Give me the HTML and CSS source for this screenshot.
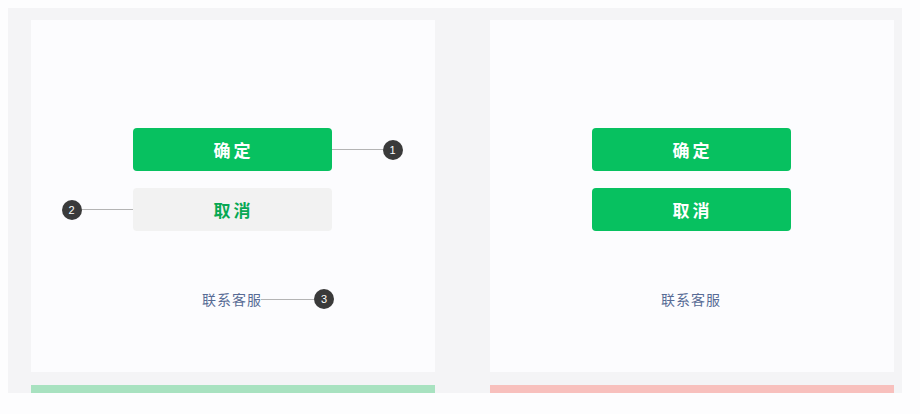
FILE: index.html
```html
<!DOCTYPE html>
<html lang="zh">
<head>
<meta charset="utf-8">
<link rel="stylesheet" href="styles.css">
</head>
<body>
<div class="panel">
  <div class="col">
    <div class="card">
      <div class="btn primary">确定
        <span class="note right"><span class="line"></span><span class="dot">1</span></span>
      </div>
      <div class="btn secondary">取消
        <span class="note left"><span class="dot">2</span><span class="line"></span></span>
      </div>
      <div class="link">联系客服
        <span class="note right link-note"><span class="line"></span><span class="dot">3</span></span>
      </div>
    </div>
    <div class="bar good"></div>
  </div>
  <div class="col">
    <div class="card">
      <div class="btn primary">确定</div>
      <div class="btn primary">取消</div>
      <div class="link">联系客服</div>
    </div>
    <div class="bar bad"></div>
  </div>
</div>
</body>
</html>
```

FILE: styles.css
```css
html, body {
  margin: 0;
  padding: 0;
  background: #fdfdfe;
  font-family: "Noto Sans CJK SC", "Noto Sans", sans-serif;
}
.panel {
  margin: 8px 0 0 8px;
  width: 894px;
  height: 385px;
  box-sizing: border-box;
  background: #f4f4f6;
  padding: 12px 8px 0 23px;
  display: flex;
  gap: 55px;
}
.col {
  width: 404px;
  display: flex;
  flex-direction: column;
  gap: 13px;
}
.card {
  height: 352px;
  background: #fcfcfe;
  display: flex;
  flex-direction: column;
  align-items: center;
  padding-top: 108px;
  padding-right: 2px;
  box-sizing: border-box;
  gap: 17px;
}
.btn {
  position: relative;
  width: 199px;
  height: 43px;
  border-radius: 4px;
  display: flex;
  align-items: center;
  justify-content: center;
  font-size: 17px;
  font-weight: 700;
  letter-spacing: 3px;
  padding-left: 3px;
  padding-bottom: 1px;
  box-sizing: border-box;
}
.primary {
  background: #07c160;
  color: #ffffff;
}
.secondary {
  background: #f2f2f2;
  color: #07a854;
}
.link {
  position: relative;
  margin-top: 41px;
  font-size: 14px;
  line-height: 20px;
  letter-spacing: 1px;
  color: #576b95;
}
.note {
  position: absolute;
  top: 50%;
  display: flex;
  align-items: center;
  transform: translateY(-50%);
  letter-spacing: 0;
}
.note.right { left: 100%; }
.note.left { right: 100%; }
.link-note { margin-left: -1px; }
.line {
  width: 51px;
  height: 1px;
  background: #b4b4b4;
}
.link-note .line { width: 53px; }
.dot {
  width: 20px;
  height: 20px;
  border-radius: 50%;
  background: #3a3a3a;
  color: #ffffff;
  font-family: "Liberation Sans", Arial, sans-serif;
  font-size: 11px;
  font-weight: 400;
  display: flex;
  align-items: center;
  justify-content: center;
}
.bar {
  height: 8px;
}
.good { background: #a8e2c0; }
.bad { background: #f8c0bd; }
```
